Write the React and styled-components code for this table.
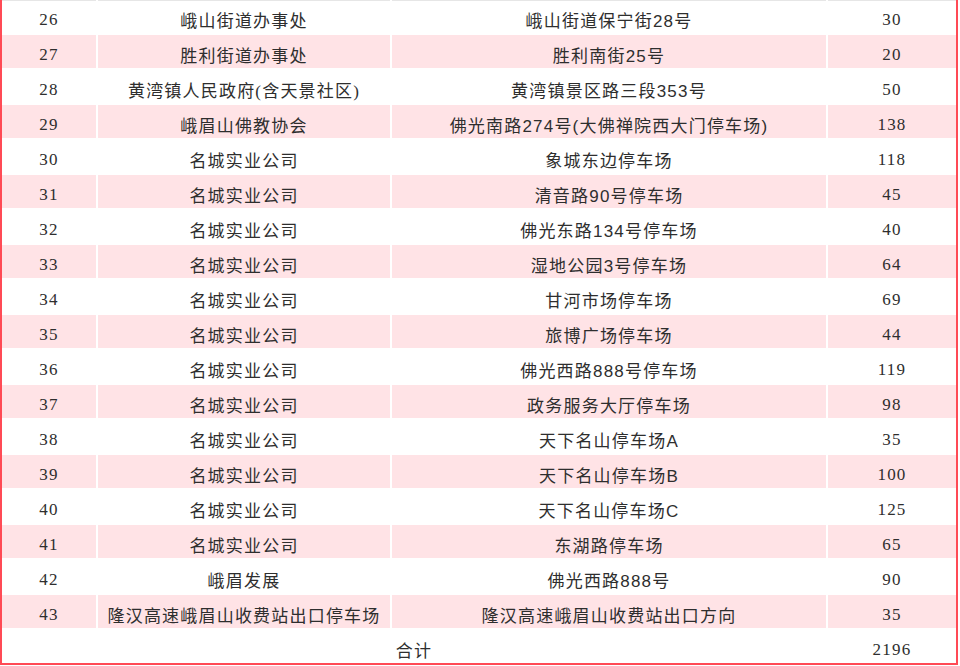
import styled, { createGlobalStyle } from "styled-components";

const GlobalStyle = createGlobalStyle`
  body {
    margin: 0;
    background: #fff;
  }
`;

const CJK = '"Noto Sans CJK SC", "Noto Sans CJK TC", "Noto Sans CJK JP", "Noto Sans CJK KR"';

const rows = [
  [26, "峨山街道办事处", "峨山街道保宁街28号", 30],
  [27, "胜利街道办事处", "胜利南街25号", 20],
  [28, "黄湾镇人民政府(含天景社区)", "黄湾镇景区路三段353号", 50],
  [29, "峨眉山佛教协会", "佛光南路274号(大佛禅院西大门停车场)", 138],
  [30, "名城实业公司", "象城东边停车场", 118],
  [31, "名城实业公司", "清音路90号停车场", 45],
  [32, "名城实业公司", "佛光东路134号停车场", 40],
  [33, "名城实业公司", "湿地公园3号停车场", 64],
  [34, "名城实业公司", "甘河市场停车场", 69],
  [35, "名城实业公司", "旅博广场停车场", 44],
  [36, "名城实业公司", "佛光西路888号停车场", 119],
  [37, "名城实业公司", "政务服务大厅停车场", 98],
  [38, "名城实业公司", "天下名山停车场A", 35],
  [39, "名城实业公司", "天下名山停车场B", 100],
  [40, "名城实业公司", "天下名山停车场C", 125],
  [41, "名城实业公司", "东湖路停车场", 65],
  [42, "峨眉发展", "佛光西路888号", 90],
  [43, "隆汉高速峨眉山收费站出口停车场", "隆汉高速峨眉山收费站出口方向", 35],
];

const Frame = styled.div`
  width: 954px;
  border: 2px solid #ff4a55;
  border-top: none;
  background: #fff;
`;

const Grid = styled.div`
  display: grid;
  grid-template-columns: 94px 292px 434px 128px;
  grid-auto-rows: 33px;
  gap: 2px;
  font-family: "Liberation Serif", ${CJK}, serif;
  font-size: 17px;
  letter-spacing: 1.2px;
  color: #2e2e2e;
`;

const Cell = styled.div`
  display: flex;
  align-items: center;
  justify-content: center;
  box-sizing: border-box;
  padding-top: ${(p) => (p.$first ? "5px" : "6px")};
  white-space: nowrap;
  background: ${(p) => (p.$pink ? "#ffe3e6" : "#fff")};
  border-top: ${(p) => (p.$first ? "1px solid #e6e6e6" : "none")};
  font-family: ${(p) =>
    p.$sans ? `"Liberation Sans", ${CJK}, sans-serif` : "inherit"};
`;

const TotalLabel = styled(Cell)`
  grid-column: span 3;
  height: 32px;
`;

export default function App() {
  return (
    <>
      <GlobalStyle />
      <Frame lang="zh-CN">
        <Grid>
          {rows.map(([no, org, place, count], i) => {
            const pink = i % 2 === 1;
            const first = i === 0;
            return [
              <Cell key={no + "a"} $pink={pink} $first={first}>{no}</Cell>,
              <Cell key={no + "b"} $pink={pink} $first={first}>{org}</Cell>,
              <Cell key={no + "c"} $pink={pink} $first={first} $sans>{place}</Cell>,
              <Cell key={no + "d"} $pink={pink} $first={first}>{count}</Cell>,
            ];
          })}
          <TotalLabel>合计</TotalLabel>
          <Cell>2196</Cell>
        </Grid>
      </Frame>
    </>
  );
}
